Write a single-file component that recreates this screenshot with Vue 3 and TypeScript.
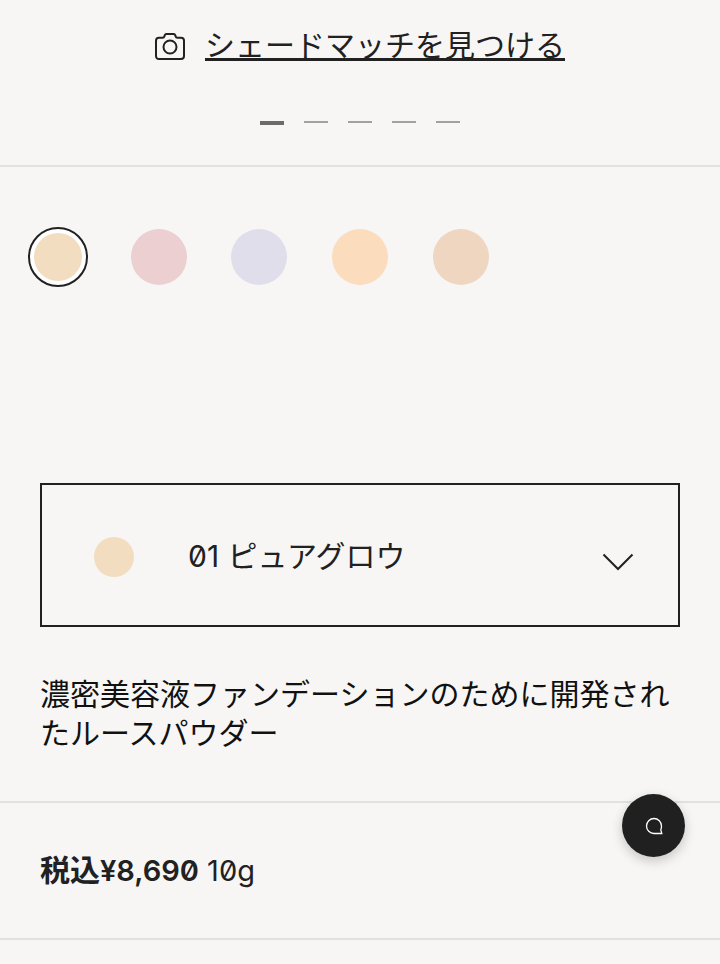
<script setup lang="ts">
import { ref } from 'vue'

interface Shade {
  id: string
  name: string
  color: string
}

const shades: Shade[] = [
  { id: '01', name: '01 ピュアグロウ', color: '#f3ddc0' },
  { id: '02', name: '02', color: '#ebcfd1' },
  { id: '03', name: '03', color: '#e0deeb' },
  { id: '04', name: '04', color: '#fbdcbc' },
  { id: '05', name: '05', color: '#eed6c0' },
]

const selected = ref<Shade>(shades[0])
const slideCount = 5
const activeSlide = ref(1)
</script>

<template>
  <main class="product">
    <section class="gallery">
      <a class="match" href="#shade-match">
        <svg class="camera" viewBox="0 0 30 27" aria-hidden="true">
          <path d="M4 4.800h3.600c1 0 1.500-.4 1.700-1.200l.4-1.200c.3-.9.7-1.400 1.600-1.400h7.400c.9 0 1.300.5 1.600 1.400l.4 1.200c.2.800.7 1.200 1.700 1.200H26c1.800 0 3 1.200 3 3V23c0 1.800-1.200 3-3 3H4c-1.800 0-3-1.200-3-3V7.800c0-1.800 1.200-3 3-3z" />
          <circle cx="15" cy="14" r="6.500" />
        </svg>
        <span class="match-text">シェードマッチを見つける</span>
      </a>
      <div class="slides">
        <button
          v-for="n in slideCount"
          :key="n"
          type="button"
          class="slide"
          :class="{ active: n === activeSlide }"
          :aria-label="String(n)"
          @click="activeSlide = n"
        ></button>
      </div>
    </section>

    <section class="shades">
      <div class="swatches" role="radiogroup">
        <label v-for="shade in shades" :key="shade.id" class="swatch">
          <input v-model="selected" type="radio" name="shade" :value="shade" :aria-label="shade.name" />
          <span class="dot" :style="{ backgroundColor: shade.color }"></span>
        </label>
      </div>

      <label class="picker">
        <span class="picker-dot" :style="{ backgroundColor: selected.color }"></span>
        <select v-model="selected" class="picker-select" :aria-label="selected.name">
          <option v-for="shade in shades" :key="shade.id" :value="shade">{{ shade.name }}</option>
        </select>
        <svg class="chevron" viewBox="0 0 32 18" aria-hidden="true">
          <path d="M1.500 1.500L16 16L30.500 1.500" />
        </svg>
      </label>

      <p class="description">濃密美容液ファンデーションのために開発されたルースパウダー</p>
    </section>

    <section class="price">
      <strong><span class="tax">税込</span>¥8,690</strong> <span>10g</span>
    </section>

    <button type="button" class="chat" aria-label="チャット">
      <svg viewBox="0 0 18 18" aria-hidden="true">
        <path d="M15.800 12.800Q16.500 11.200 16.500 9A7.500 7.500 0 1 0 9 16.500H16.800Z" />
      </svg>
    </button>
  </main>
</template>

<style>
body {
  background: #f7f6f4;
}
</style>

<style scoped>
.product {
  color: #212121;
  font-family: Inter, "Noto Sans CJK JP", sans-serif;
  font-feature-settings: "zero" 1;
  font-size: 30px;
  line-height: 40px;
}

.gallery {
  display: flex;
  flex-direction: column;
  align-items: center;
  gap: 56px;
  padding: 25px 40px 40px;
  border-bottom: 2px solid #e2e1df;
}

.match {
  display: flex;
  align-items: center;
  gap: 20px;
  color: inherit;
  text-decoration: none;
}

.camera {
  width: 30px;
  height: 27px;
  margin-top: 2px;
  fill: none;
  stroke: #212121;
  stroke-width: 2;
}

.match-text {
  text-decoration: underline;
  text-decoration-thickness: 3px;
  text-decoration-skip-ink: none;
  text-underline-offset: 2px;
}

.slides {
  display: flex;
  gap: 20px;
}

.slide {
  width: 24px;
  height: 4px;
  padding: 0;
  border: 0;
  border-top: 2px solid #a2a1a0;
  background: none;
  cursor: pointer;
}

.slide.active {
  border-top: 4px solid #6c6b6a;
}

.shades {
  padding: 60px 40px 48px;
  border-bottom: 2px solid #e2e1df;
}

.swatches {
  display: grid;
  grid-template-columns: repeat(7, 1fr);
  justify-items: center;
  margin: 0 -32px 196px;
}

.swatch {
  display: grid;
  place-items: center;
  width: 60px;
  height: 60px;
  cursor: pointer;
}

.swatch input,
.dot {
  grid-area: 1 / 1;
}

.swatch input {
  width: 60px;
  height: 60px;
  margin: 0;
  appearance: none;
  border-radius: 50%;
}

.swatch input:checked {
  border: 2px solid #212121;
  background: #fff;
}

.dot {
  z-index: 1;
  width: 56px;
  height: 56px;
  border-radius: 50%;
}

.swatch input:checked + .dot {
  width: 48px;
  height: 48px;
}

.picker {
  display: grid;
  grid-template-columns: 1fr;
  align-items: center;
}

.picker > * {
  grid-area: 1 / 1;
}

.picker-select {
  width: 100%;
  height: 144px;
  padding: 2px 96px 0 146px;
  appearance: none;
  border: 2px solid #212121;
  border-radius: 0;
  background: transparent;
  color: inherit;
  font: inherit;
  font-feature-settings: inherit;
}

.picker-dot {
  width: 40px;
  height: 40px;
  margin: 4px 0 0 54px;
  border-radius: 50%;
}

.chevron {
  justify-self: end;
  width: 32px;
  height: 18px;
  margin: 14px 46px 0 0;
  fill: none;
  stroke: #212121;
  stroke-width: 2;
  pointer-events: none;
}

.description {
  margin: 48px 0 0;
  color: #111;
  line-height: 39px;
}

.price {
  padding: 47px 40px;
  border-bottom: 2px solid #e2e1df;
  font-size: 29px;
}

.price strong {
  font-weight: 600;
}

.tax {
  font-size: 30px;
}

.chat {
  position: fixed;
  right: 35px;
  bottom: 107px;
  display: grid;
  place-items: center;
  width: 63px;
  height: 63px;
  padding: 0;
  border: 0;
  border-radius: 50%;
  background: #212021;
  box-shadow: 0 4px 12px rgb(0 0 0 / 20%);
  cursor: pointer;
}

.chat svg {
  width: 18px;
  height: 18px;
  fill: none;
  stroke: #fff;
  stroke-width: 1.300;
}
</style>
